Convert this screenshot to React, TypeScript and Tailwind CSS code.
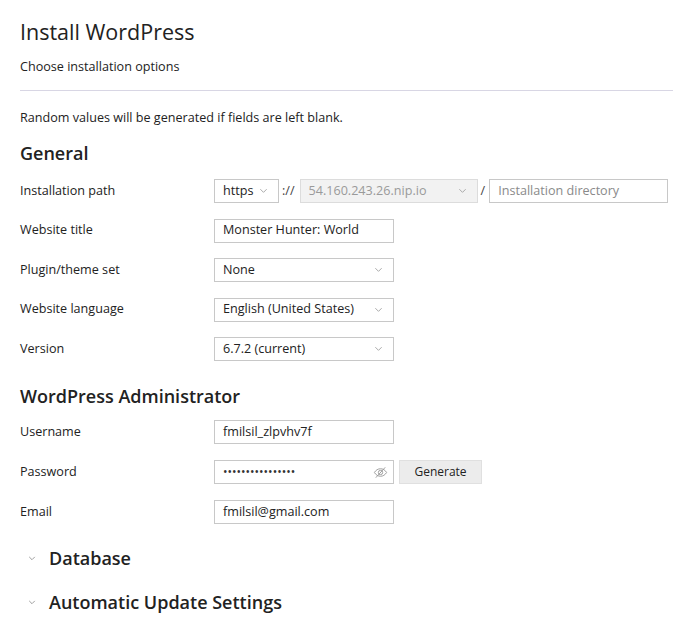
import React from 'react';

const Chevron: React.FC<{ className?: string }> = ({ className }) => (
  <svg viewBox="0 0 10 6" className={className} fill="none" stroke="currentColor" strokeWidth="1">
    <path d="M1.5 1l3.5 3.5L8.5 1" />
  </svg>
);

const EyeOff: React.FC = () => (
  <svg viewBox="0 0 16 16" className="w-[15px] h-[15px] text-[#9a9a9a]" fill="none" stroke="currentColor" strokeWidth="1">
    <path d="M1.5 8c1.6-2.6 3.8-4 6.5-4s4.9 1.4 6.5 4c-1.6 2.6-3.8 4-6.5 4S3.1 10.6 1.5 8z" />
    <circle cx="8" cy="8" r="2.3" />
    <path d="M13 2.5L3 13.5" />
  </svg>
);

const Row: React.FC<{ label: string; children: React.ReactNode }> = ({ label, children }) => (
  <div className="flex items-center h-6">
    <div className="w-[194px] shrink-0">{label}</div>
    <div className="flex items-center">{children}</div>
  </div>
);

const Select: React.FC<{ value: string; width: string; disabled?: boolean }> = ({ value, width, disabled }) => (
  <div
    className={`${width} h-6 flex items-center justify-between pl-2 pr-2.5 border ${
      disabled ? 'bg-[#f2f2f2] border-[#dcdcdc] text-[#9a9a9a]' : 'bg-white border-[#c8c8c8] text-[#222]'
    }`}
  >
    <span>{value}</span>
    <Chevron className="w-[9px] h-[6px] text-[#a0a0a0]" />
  </div>
);

const Input: React.FC<{ value?: string; placeholder?: string; width?: string }> = ({ value, placeholder, width = 'w-[180px]' }) => (
  <div className={`${width} h-6 flex items-center px-2 border border-[#c8c8c8] bg-white`}>
    {value ? <span className="text-[#222]">{value}</span> : <span className="text-[#8a8a8a]">{placeholder}</span>}
  </div>
);

const Collapsed: React.FC<{ title: string }> = ({ title }) => (
  <div className="flex items-center h-6">
    <Chevron className="w-[8px] h-[5px] ml-[8px] mr-[13px] text-[#888]" />
    <span className="text-[18px] font-semibold text-[#222]">{title}</span>
  </div>
);

export default function App() {
  return (
    <div className="w-[673px] h-[623px] bg-white px-5 pt-[16px] text-[12.6px] text-[#222]" style={{ fontFamily: '"Open Sans", sans-serif' }}>
      <h1 className="text-[21.5px] leading-[32px] font-normal text-[#222]">Install WordPress</h1>
      <p className="mt-[10px] leading-[18px]">Choose installation options</p>
      <div className="mt-[14px] h-px bg-[#d8d6e4] -mr-5" />
      <p className="mt-[18px] leading-[18px]">Random values will be generated if fields are left blank.</p>

      <h2 className="mt-[14px] text-[18px] leading-[24px] font-semibold text-[#222]">General</h2>
      <div className="mt-[14px] flex flex-col gap-[15.5px]">
        <Row label="Installation path">
          <Select value="https" width="w-[65px]" />
          <span className="ml-[3px] mr-[5px] text-[#444]">://</span>
          <Select value="54.160.243.26.nip.io" width="w-[178px]" disabled />
          <span className="ml-[3px] mr-[4px] text-[#444]">/</span>
          <Input placeholder="Installation directory" width="w-[179px]" />
        </Row>
        <Row label="Website title">
          <Input value="Monster Hunter: World" />
        </Row>
        <Row label="Plugin/theme set">
          <Select value="None" width="w-[180px]" />
        </Row>
        <Row label="Website language">
          <Select value="English (United States)" width="w-[180px]" />
        </Row>
        <Row label="Version">
          <Select value="6.7.2 (current)" width="w-[180px]" />
        </Row>
      </div>

      <h2 className="mt-[23px] text-[18px] leading-[24px] font-semibold text-[#222]">WordPress Administrator</h2>
      <div className="mt-[12px] flex flex-col gap-4">
        <Row label="Username">
          <Input value="fmilsil_zlpvhv7f" />
        </Row>
        <Row label="Password">
          <div className="w-[180px] h-6 flex items-center justify-between pl-2 pr-[5px] border border-[#c8c8c8] bg-white">
            <span className="text-[#333] text-[12px]">••••••••••••••••</span>
            <EyeOff />
          </div>
          <button className="ml-[5px] w-[83px] h-6 bg-[#ececec] border border-[#e0e0e0] text-[12px] text-[#222]">Generate</button>
        </Row>
        <Row label="Email">
          <Input value="fmilsil@gmail.com" />
        </Row>
      </div>

      <div className="mt-[22px] flex flex-col gap-5">
        <Collapsed title="Database" />
        <Collapsed title="Automatic Update Settings" />
      </div>
    </div>
  );
}
